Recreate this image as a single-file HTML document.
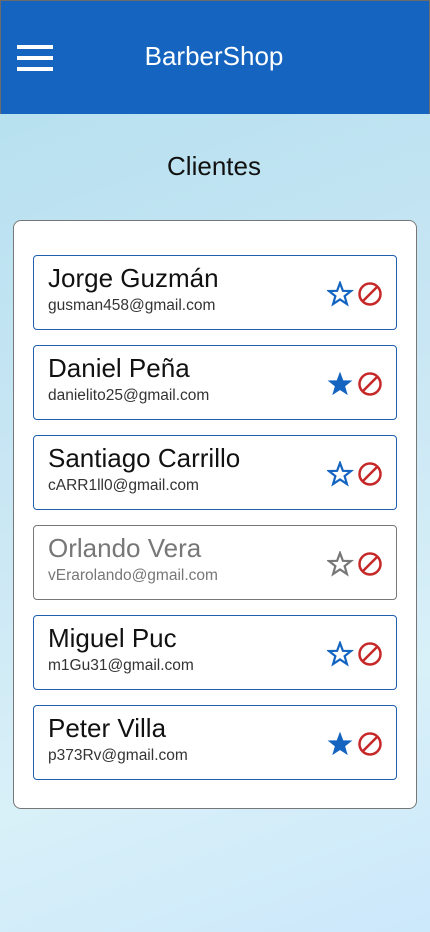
<!DOCTYPE html>
<html><head><meta charset="utf-8"><style>
*{margin:0;padding:0;box-sizing:border-box}
body{width:430px;height:932px;overflow:hidden;font-family:"Liberation Sans",sans-serif;background:linear-gradient(160deg,#b2dfee 0%,#c9e6f4 45%,#d8f0f8 75%,#cce8fb 100%);position:relative}
.hdr{position:absolute;left:0;top:0;width:430px;height:114px;background:#1565c0;border:1px solid #6b6b6b;border-bottom:none}
.hb{position:absolute;left:16px;width:36px;height:4px;background:#fff}
.title{position:absolute;left:0;right:0;top:40px;text-align:center;color:#fff;font-size:26px;padding-right:2px}
.cl{position:absolute;top:151px;left:0;right:0;text-align:center;font-size:26px;color:#111;padding-right:2px}
.box{position:absolute;left:13px;top:220px;width:404px;height:589px;background:#fff;border:1px solid #777;border-radius:8px}
.it{position:absolute;left:33px;width:364px;height:75px;border:1px solid #1f5fae;border-radius:4px;background:#fff}
.it.g{border-color:#777}
.n{position:absolute;left:14px;top:7px;font-size:26px;color:#111}
.e{position:absolute;left:14px;top:41px;font-size:15.5px;color:#333}
.g .n,.g .e{color:#777}
.ic{position:absolute;left:293px;top:25px}
</style></head><body>
<div class="hdr"><div class="hb" style="top:44px"></div><div class="hb" style="top:55px"></div><div class="hb" style="top:66px"></div><div class="title">BarberShop</div></div>
<div class="cl">Clientes</div>
<div class="box"></div>
<div class="it" style="top:255px"><div class="n">Jorge Guzmán</div><div class="e">gusman458@gmail.com</div>
<svg class="ic" width="60" height="26" viewBox="0 0 60 26"><path d="M13 2 L15.9 9.8 L24 10 L17.6 15.1 L19.9 23 L13 18.4 L6.1 23 L8.4 15.1 L2 10 L10.1 9.8 Z" fill="none" stroke="#1565c0" stroke-width="2.2"/><circle cx="43" cy="13" r="10.5" fill="none" stroke="#c62828" stroke-width="2.5"/><line x1="35.5" y1="20.5" x2="50.5" y2="5.5" stroke="#c62828" stroke-width="2.5"/></svg></div>
<div class="it" style="top:345px"><div class="n">Daniel Peña</div><div class="e">danielito25@gmail.com</div>
<svg class="ic" width="60" height="26" viewBox="0 0 60 26"><path d="M13 2 L15.9 9.8 L24 10 L17.6 15.1 L19.9 23 L13 18.4 L6.1 23 L8.4 15.1 L2 10 L10.1 9.8 Z" fill="#1565c0" stroke="#1565c0" stroke-width="1"/><circle cx="43" cy="13" r="10.5" fill="none" stroke="#c62828" stroke-width="2.5"/><line x1="35.5" y1="20.5" x2="50.5" y2="5.5" stroke="#c62828" stroke-width="2.5"/></svg></div>
<div class="it" style="top:435px"><div class="n">Santiago Carrillo</div><div class="e">cARR1ll0@gmail.com</div>
<svg class="ic" width="60" height="26" viewBox="0 0 60 26"><path d="M13 2 L15.9 9.8 L24 10 L17.6 15.1 L19.9 23 L13 18.4 L6.1 23 L8.4 15.1 L2 10 L10.1 9.8 Z" fill="none" stroke="#1565c0" stroke-width="2.2"/><circle cx="43" cy="13" r="10.5" fill="none" stroke="#c62828" stroke-width="2.5"/><line x1="35.5" y1="20.5" x2="50.5" y2="5.5" stroke="#c62828" stroke-width="2.5"/></svg></div>
<div class="it g" style="top:525px"><div class="n">Orlando Vera</div><div class="e">vErarolando@gmail.com</div>
<svg class="ic" width="60" height="26" viewBox="0 0 60 26"><path d="M13 2 L15.9 9.8 L24 10 L17.6 15.1 L19.9 23 L13 18.4 L6.1 23 L8.4 15.1 L2 10 L10.1 9.8 Z" fill="none" stroke="#777" stroke-width="2.2"/><circle cx="43" cy="13" r="10.5" fill="none" stroke="#c62828" stroke-width="2.5"/><line x1="35.5" y1="20.5" x2="50.5" y2="5.5" stroke="#c62828" stroke-width="2.5"/></svg></div>
<div class="it" style="top:615px"><div class="n">Miguel Puc</div><div class="e">m1Gu31@gmail.com</div>
<svg class="ic" width="60" height="26" viewBox="0 0 60 26"><path d="M13 2 L15.9 9.8 L24 10 L17.6 15.1 L19.9 23 L13 18.4 L6.1 23 L8.4 15.1 L2 10 L10.1 9.8 Z" fill="none" stroke="#1565c0" stroke-width="2.2"/><circle cx="43" cy="13" r="10.5" fill="none" stroke="#c62828" stroke-width="2.5"/><line x1="35.5" y1="20.5" x2="50.5" y2="5.5" stroke="#c62828" stroke-width="2.5"/></svg></div>
<div class="it" style="top:705px"><div class="n">Peter Villa</div><div class="e">p373Rv@gmail.com</div>
<svg class="ic" width="60" height="26" viewBox="0 0 60 26"><path d="M13 2 L15.9 9.8 L24 10 L17.6 15.1 L19.9 23 L13 18.4 L6.1 23 L8.4 15.1 L2 10 L10.1 9.8 Z" fill="#1565c0" stroke="#1565c0" stroke-width="1"/><circle cx="43" cy="13" r="10.5" fill="none" stroke="#c62828" stroke-width="2.5"/><line x1="35.5" y1="20.5" x2="50.5" y2="5.5" stroke="#c62828" stroke-width="2.5"/></svg></div>
</body></html>
